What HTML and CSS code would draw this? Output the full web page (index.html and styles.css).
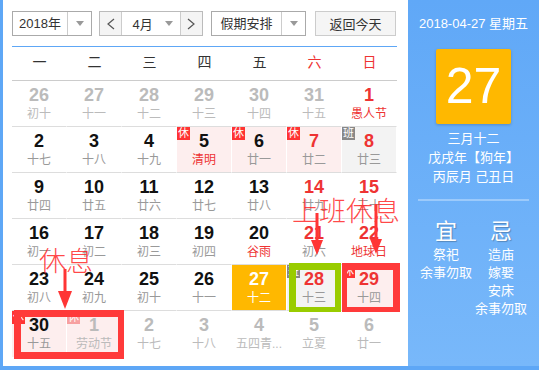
FILE: index.html
```html
<!DOCTYPE html>
<html lang="zh-CN">
<head>
    <meta charset="UTF-8">
    <title>万年历</title>
    <link rel="stylesheet" href="styles.css">
</head>
<body>
    <div class="app">
        <!-- Calendar -->
        <div class="calendar">
            <div class="toolbar">
                <div class="select year">
                    <span class="select-text">2018年</span>
                    <span class="select-arrow"><i class="caret"></i></span>
                </div>
                <div class="month-group">
                    <span class="month-btn">
                        <svg width="8" height="12" viewBox="0 0 8 12"><polyline points="7,1 1,6 7,11" fill="none" stroke="#555" stroke-width="1.2"/></svg>
                    </span>
                    <span class="month-select">
                        <span class="month-text">4月</span>
                        <i class="caret"></i>
                    </span>
                    <span class="month-btn">
                        <svg width="8" height="12" viewBox="0 0 8 12"><polyline points="1,1 7,6 1,11" fill="none" stroke="#555" stroke-width="1.2"/></svg>
                    </span>
                </div>
                <div class="select holiday">
                    <span class="select-text">假期安排</span>
                    <span class="select-arrow"><i class="caret"></i></span>
                </div>
                <button class="today-btn">返回今天</button>
            </div>

            <div class="weekdays">
                <span>一</span><span>二</span><span>三</span><span>四</span><span>五</span>
                <span class="red">六</span><span class="red">日</span>
            </div>

            <div class="days">
                <div class="day other"><b>26</b><span class="lunar">初十</span></div>
                <div class="day other"><b>27</b><span class="lunar">十一</span></div>
                <div class="day other"><b>28</b><span class="lunar">十二</span></div>
                <div class="day other"><b>29</b><span class="lunar">十三</span></div>
                <div class="day other"><b>30</b><span class="lunar">十四</span></div>
                <div class="day other"><b>31</b><span class="lunar">十五</span></div>
                <div class="day weekend"><b>1</b><span class="lunar fest">愚人节</span></div>

                <div class="day"><b>2</b><span class="lunar">十七</span></div>
                <div class="day"><b>3</b><span class="lunar">十八</span></div>
                <div class="day"><b>4</b><span class="lunar">十九</span></div>
                <div class="day rest"><i class="badge">休</i><b>5</b><span class="lunar fest">清明</span></div>
                <div class="day rest"><i class="badge">休</i><b>6</b><span class="lunar">廿一</span></div>
                <div class="day rest weekend"><i class="badge">休</i><b>7</b><span class="lunar">廿二</span></div>
                <div class="day work weekend"><i class="badge">班</i><b>8</b><span class="lunar">廿三</span></div>

                <div class="day"><b>9</b><span class="lunar">廿四</span></div>
                <div class="day"><b>10</b><span class="lunar">廿五</span></div>
                <div class="day"><b>11</b><span class="lunar">廿六</span></div>
                <div class="day"><b>12</b><span class="lunar">廿七</span></div>
                <div class="day"><b>13</b><span class="lunar">廿八</span></div>
                <div class="day weekend"><b>14</b><span class="lunar">廿九</span></div>
                <div class="day weekend"><b>15</b><span class="lunar">三十</span></div>

                <div class="day"><b>16</b><span class="lunar">初一</span></div>
                <div class="day"><b>17</b><span class="lunar">初二</span></div>
                <div class="day"><b>18</b><span class="lunar">初三</span></div>
                <div class="day"><b>19</b><span class="lunar">初四</span></div>
                <div class="day"><b>20</b><span class="lunar fest">谷雨</span></div>
                <div class="day weekend"><b>21</b><span class="lunar">初六</span></div>
                <div class="day weekend"><b>22</b><span class="lunar fest">地球日</span></div>

                <div class="day"><b>23</b><span class="lunar">初八</span></div>
                <div class="day"><b>24</b><span class="lunar">初九</span></div>
                <div class="day"><b>25</b><span class="lunar">初十</span></div>
                <div class="day"><b>26</b><span class="lunar">十一</span></div>
                <div class="day today"><b>27</b><span class="lunar">十二</span></div>
                <div class="day work weekend"><i class="badge">班</i><b>28</b><span class="lunar">十三</span></div>
                <div class="day rest weekend"><i class="badge">休</i><b>29</b><span class="lunar">十四</span></div>

                <div class="day rest last"><i class="badge">休</i><b>30</b><span class="lunar">十五</span></div>
                <div class="day rest other last"><i class="badge">休</i><b>1</b><span class="lunar">劳动节</span></div>
                <div class="day other last"><b>2</b><span class="lunar">十七</span></div>
                <div class="day other last"><b>3</b><span class="lunar">十八</span></div>
                <div class="day other last"><b>4</b><span class="lunar">五四青...</span></div>
                <div class="day other last"><b>5</b><span class="lunar">立夏</span></div>
                <div class="day other last"><b>6</b><span class="lunar">廿一</span></div>
            </div>
        </div>

        <!-- Day detail -->
        <aside class="panel">
            <div class="panel-date">2018-04-27 星期五</div>
            <div class="big-day">27</div>
            <div class="panel-lunar">
                <p>三月十二</p>
                <p>戊戌年【狗年】</p>
                <p>丙辰月 己丑日</p>
            </div>
            <div class="panel-line"></div>
            <div class="yiji">
                <div class="yiji-col">
                    <h3>宜</h3>
                    <p>祭祀</p>
                    <p>余事勿取</p>
                </div>
                <div class="yiji-col">
                    <h3>忌</h3>
                    <p>造庙</p>
                    <p>嫁娶</p>
                    <p>安床</p>
                    <p>余事勿取</p>
                </div>
            </div>
        </aside>

        <!-- Hand-drawn marks on top of the screenshot -->
        <div class="mark-box green box-28"></div>
        <div class="mark-box red box-29"></div>
        <div class="mark-box red box-30"></div>
        <div class="note note-work">上班休息</div>
        <div class="note note-rest">休息</div>
        <svg class="arrow arrow-1" width="14" height="42" viewBox="0 0 14 42"><rect x="5.5" y="0" width="3" height="30" fill="#ff3535"/><polygon points="1,27 13,27 7,42" fill="#ff3535"/></svg>
        <svg class="arrow arrow-2" width="14" height="50" viewBox="0 0 14 50"><rect x="5.5" y="0" width="3" height="38" fill="#ff3535"/><polygon points="1,35 13,35 7,50" fill="#ff3535"/></svg>
        <svg class="arrow arrow-3" width="16" height="40" viewBox="0 0 16 40"><rect x="6.5" y="0" width="3" height="26" fill="#ff3535"/><polygon points="1,22 15,22 8,40" fill="#ff3535"/></svg>
    </div>
</body>
</html>
```

FILE: styles.css
```css
* {
    margin: 0;
    padding: 0;
    box-sizing: border-box;
}

body {
    font-family: "Liberation Sans", "Noto Sans CJK SC", sans-serif;
    background-color: #fff;
    color: #333;
}

.app {
    position: relative;
    display: flex;
    width: 539px;
    height: 370px;
    border-left: 3px solid #5ea7f6;
    border-bottom: 4px solid #5ea7f6;
    background-color: #fff;
}

/* Calendar */
.calendar {
    width: 405px;
    padding: 11px 11px 0 9px;
}

.toolbar {
    display: flex;
    height: 36px;
    padding-bottom: 11px;
    border-bottom: 1px solid #5ea7f6;
    font-size: 13px;
}

.select {
    display: flex;
    height: 25px;
    border: 1px solid #aaa;
    background-color: #fff;
}

.select-text {
    flex: 1;
    line-height: 23px;
    text-align: center;
}

.select-arrow {
    display: flex;
    align-items: center;
    justify-content: center;
    width: 24px;
    border-left: 1px solid #ccc;
}

.caret {
    display: block;
    width: 0;
    height: 0;
    border-left: 4px solid transparent;
    border-right: 4px solid transparent;
    border-top: 5px solid #999;
}

.year {
    width: 80px;
}

.holiday {
    width: 95px;
    margin-left: 8px;
}

.month-group {
    display: flex;
    width: 104px;
    height: 25px;
    margin-left: 7px;
    border: 1px solid #bbb;
}

.month-btn {
    display: flex;
    align-items: center;
    justify-content: center;
    width: 22px;
    background-color: #f4f4f4;
}

.month-select {
    display: flex;
    align-items: center;
    width: 60px;
    padding: 0 7px 0 10px;
    border-left: 1px solid #ccc;
    border-right: 1px solid #ccc;
    background-color: #fff;
}

.month-text {
    flex: 1;
}

.today-btn {
    width: 81px;
    height: 25px;
    margin-left: 9px;
    border: 1px solid #ccc;
    background-color: #f5f5f5;
    font-family: inherit;
    font-size: 13px;
    color: #333;
}

.weekdays {
    display: grid;
    grid-template-columns: repeat(7, 55px);
    height: 34px;
    padding-bottom: 2px;
    border-bottom: 1px solid #ccc;
    font-size: 14px;
    line-height: 31px;
    text-align: center;
}

.red {
    color: #e33;
}

.days {
    display: grid;
    grid-template-columns: repeat(7, 55px);
}

.day {
    position: relative;
    height: 46px;
    padding-top: 4px;
    border-bottom: 1px solid #ddd;
    border-right: 1px solid #fff;
    text-align: center;
}

.day.last {
    border-bottom-color: transparent;
}

.day b {
    display: block;
    font-size: 18px;
    line-height: 20px;
    color: #111;
}

.lunar {
    display: block;
    margin-top: 1px;
    font-size: 12px;
    line-height: 16px;
    color: #999;
    white-space: nowrap;
}

.day.weekend b,
.lunar.fest {
    color: #e33;
}

.day.other b,
.day.other .lunar {
    color: #bbb;
}

.rest {
    background-color: #fdeeee;
}

.work {
    background-color: #f3f3f3;
}

.badge {
    position: absolute;
    top: 0;
    left: 0;
    width: 13px;
    height: 13px;
    font-style: normal;
    font-size: 11px;
    line-height: 13px;
    color: #fff;
    background-color: #f33;
}

.work .badge {
    background-color: #888;
}

.other .badge {
    background-color: #f7a0a0;
}

.day.today {
    background-color: #ffb800;
}

.day.today b,
.day.today .lunar {
    color: #fff;
}

/* Detail panel */
.panel {
    flex: 1;
    padding-top: 15px;
    background: linear-gradient(#60a8f7, #78b8fa);
    color: #fff;
    text-align: center;
}

.panel-date {
    font-size: 13px;
    line-height: 18px;
}

.big-day {
    width: 75px;
    height: 75px;
    margin: 16px auto 0;
    background-color: #ffb800;
    box-shadow: 0 1px 3px rgba(0, 0, 0, 0.2);
    border-radius: 2px;
    font-size: 50px;
    line-height: 75px;
}

.panel-lunar {
    margin-top: 5px;
    font-size: 13px;
    line-height: 19px;
}

.panel-line {
    height: 2px;
    margin: 13px 10px 0;
    background-color: #9ccafb;
}

.yiji {
    display: flex;
    justify-content: center;
    margin-top: 18px;
}

.yiji-col {
    width: 55px;
    font-size: 13px;
    line-height: 18px;
    white-space: nowrap;
}

.yiji-col h3 {
    margin-bottom: 1px;
    font-size: 22px;
    font-weight: normal;
    line-height: 26px;
    text-shadow: 1px 1px 1px rgba(0, 0, 0, 0.25);
}

/* Annotations */
.mark-box {
    position: absolute;
    border-style: solid;
}

.mark-box.green {
    border-color: #99cc00;
}

.mark-box.red {
    border-color: #ff3a3a;
}

.box-28 {
    left: 286px;
    top: 263px;
    width: 52px;
    height: 49px;
    border-width: 7px 6px 5px 7px;
}

.box-29 {
    left: 339px;
    top: 263px;
    width: 58px;
    height: 49px;
    border-width: 7px 7px 5px 5px;
}

.box-30 {
    left: 11px;
    top: 310px;
    width: 110px;
    height: 49px;
    border-width: 7px 6px 7px 7px;
}

.note {
    position: absolute;
    font-family: "Noto Sans CJK SC", sans-serif;
    font-size: 27px;
    font-weight: 200;
    line-height: 27px;
    color: rgba(255, 40, 40, 0.85);
    white-space: nowrap;
}

.note-work {
    left: 289px;
    top: 196px;
}

.note-rest {
    left: 36px;
    top: 246px;
}

.arrow {
    position: absolute;
}

.arrow-1 {
    left: 307px;
    top: 213px;
}

.arrow-2 {
    left: 366px;
    top: 204px;
}

.arrow-3 {
    left: 54px;
    top: 269px;
}
```
